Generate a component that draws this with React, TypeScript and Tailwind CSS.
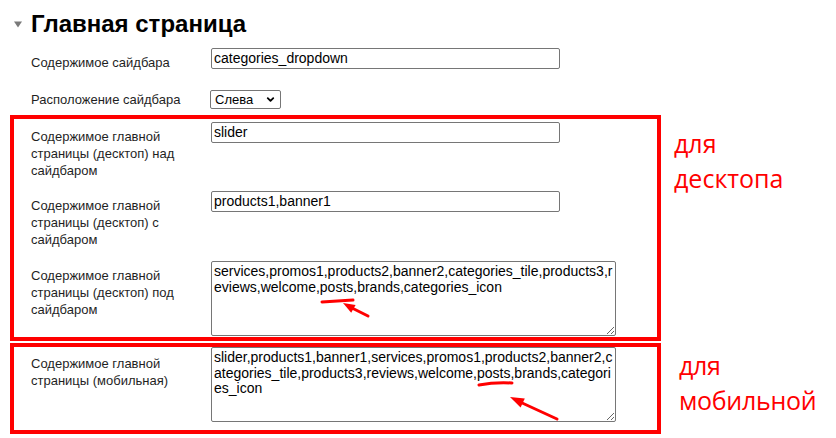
import { ChevronDown } from "lucide-react";

const sans = "font-['Liberation_Sans','Arial',sans-serif]";

function Label({ children, className = "" }: { children: React.ReactNode; className?: string }) {
  return (
    <div className={`w-[180px] shrink-0 pr-[15px] text-[13px] leading-[17px] text-[#1f1f1f] ${className}`}>
      {children}
    </div>
  );
}

function TextInput({ value }: { value: string }) {
  return (
    <input
      readOnly
      value={value}
      className="block h-[21px] w-[349px] rounded-[2px] border border-[#767676] bg-white px-[2px] text-[14px] text-black outline-none"
    />
  );
}

function TextArea({ value }: { value: string }) {
  return (
    <textarea
      readOnly
      value={value}
      className="block h-[75px] w-[405px] resize rounded-[2px] border border-[#767676] bg-white p-[2px] text-[14px] leading-[15.5px] break-all text-black outline-none"
    />
  );
}

export default function App() {
  return (
    <div className={`relative h-[438px] w-[836px] overflow-hidden bg-white pl-[10px] ${sans}`}>
      {/* Section title */}
      <div className="mt-[10px] flex items-center">
        <svg className="mr-[9px] ml-[4px]" width="8" height="7" viewBox="0 0 8 7">
          <polygon points="0,0.5 8,0.5 4,6.5" fill="#7a7a7a" />
        </svg>
        <h2 className="text-[24px] leading-[28px] font-bold text-black">Главная страница</h2>
      </div>

      <div className="mt-[10px] flex items-start pl-[21px]">
        <Label className="pt-[6px]">Содержимое сайдбара</Label>
        <TextInput value="categories_dropdown" />
      </div>

      <div className="mt-[19px] flex items-center pl-[21px]">
        <Label>Расположение сайдбара</Label>
        <div className="relative -ml-px">
          <select
            defaultValue="left"
            className="block h-[19px] w-[71px] appearance-none rounded-[2px] border border-[#767676] bg-white pl-[4px] text-[13px] leading-[17px] text-black outline-none"
          >
            <option value="left">Слева</option>
            <option value="right">Справа</option>
          </select>
          <ChevronDown
            className="pointer-events-none absolute top-[4px] right-[5px] h-[11px] w-[11px] text-black"
            strokeWidth={4}
          />
        </div>
      </div>

      {/* Desktop group */}
      <div className="mt-[6px] flex items-start gap-[13px]">
        <div className="h-[226px] w-[651px] shrink-0 border-4 border-[#ff0000] pt-[3px] pl-[17px]">
          <div className="flex items-start">
            <Label className="pt-[6px]">Содержимое главной страницы (десктоп) над сайдбаром</Label>
            <TextInput value="slider" />
          </div>
          <div className="mt-[12px] flex items-start">
            <Label className="pt-[6px]">Содержимое главной страницы (десктоп) с сайдбаром</Label>
            <TextInput value="products1,banner1" />
          </div>
          <div className="mt-[13px] flex items-start">
            <Label className="pt-[6px]">Содержимое главной страницы (десктоп) под сайдбаром</Label>
            <TextArea value="services,promos1,products2,banner2,categories_tile,products3,reviews,welcome,posts,brands,categories_icon" />
          </div>
        </div>
        <div className="pt-[11px] font-['Open_Sans',sans-serif] text-[25px] leading-[35px] text-[#ff0000]">
          <div>для</div>
          <div>десктопа</div>
        </div>
      </div>

      {/* Mobile group */}
      <div className="mt-[2px] flex items-start gap-[18px]">
        <div className="h-[91px] w-[651px] shrink-0 border-4 border-[#ff0000] pl-[17px]">
          <div className="flex items-start">
            <Label className="pt-[8px]">Содержимое главной страницы (мобильная)</Label>
            <TextArea value="slider,products1,banner1,services,promos1,products2,banner2,categories_tile,products3,reviews,welcome,posts,brands,categories_icon" />
          </div>
        </div>
        <div className="pt-[5px] font-['Open_Sans',sans-serif] text-[25px] leading-[35px] text-[#ff0000] tracking-[-0.3px]">
          <div>для</div>
          <div>мобильной</div>
        </div>
      </div>

      {/* Hand-drawn marks */}
      <svg
        className="pointer-events-none absolute top-0 left-0"
        width="836"
        height="438"
        viewBox="0 0 836 438"
      >
        <g stroke="#ff0000" strokeWidth="3" strokeLinecap="round" fill="none">
          <path d="M322 302 L353 300" />
          <path d="M368 316 L350 307" />
          <path d="M479 385 Q495 382 512 383" />
          <path d="M557 419 L520 402" />
        </g>
        <g fill="#ff0000">
          <polygon points="343,303 355.6,305 351.2,312.8" />
          <polygon points="510,397 524.8,398.4 520.6,407.4" />
        </g>
      </svg>
    </div>
  );
}
